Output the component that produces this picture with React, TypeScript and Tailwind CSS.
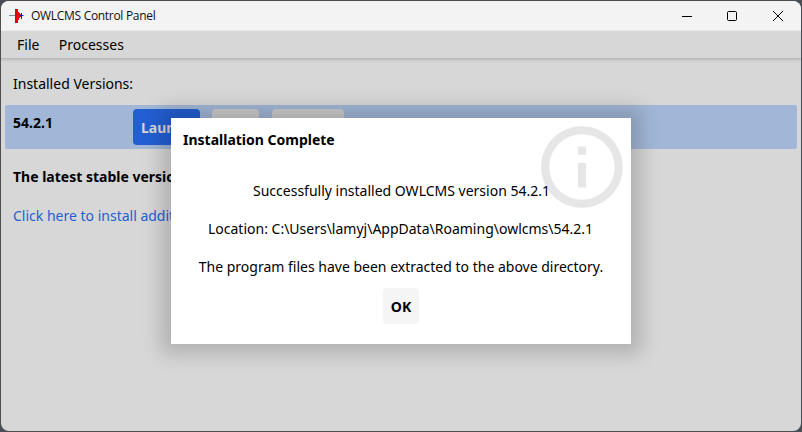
function TitleBar() {
  return (
    <header className="flex h-[30px] shrink-0 items-center bg-[#f3f3f3] pl-2">
      <svg width="16" height="16" viewBox="0 0 16 16" shapeRendering="crispEdges">
        <rect x="0" y="7" width="15" height="1" fill="#888888" />
        <rect x="6" y="1" width="2" height="14" fill="#e00000" />
        <rect x="8" y="1" width="1" height="14" fill="#2d6a20" />
        <rect x="9" y="4" width="1" height="8" fill="#f00000" />
        <rect x="10" y="5" width="1" height="5" fill="#f00000" />
        <rect x="11" y="6" width="1" height="3" fill="#c02040" />
        <rect x="12" y="5" width="1" height="6" fill="#1818c8" />
        <rect x="11" y="7" width="3" height="1" fill="#1818c8" />
      </svg>
      <h1 className="ml-[6px] font-['Open_Sans','Noto_Sans',sans-serif] text-[12px] leading-[16px] tracking-[-0.3px] text-[#111]">
        OWLCMS Control Panel
      </h1>
      <div className="ml-auto flex h-full text-black">
        <button className="flex w-[46px] items-center justify-center pl-[2px]" aria-label="Minimize">
          <svg width="10" height="10" viewBox="0 0 10 10"><path d="M0 5.500H10" stroke="currentColor" /></svg>
        </button>
        <button className="flex w-[46px] items-center justify-center" aria-label="Maximize">
          <svg width="10" height="10" viewBox="0 0 10 10" fill="none"><rect x=".5" y=".5" width="9" height="9" rx="1" stroke="currentColor" /></svg>
        </button>
        <button className="flex w-[46px] items-center justify-center" aria-label="Close">
          <svg width="10" height="10" viewBox="0 0 10 10"><path d="M0 0L10 10M10 0L0 10" stroke="currentColor" /></svg>
        </button>
      </div>
    </header>
  );
}

function InfoDialog() {
  return (
    <section
      role="dialog"
      className="absolute left-[170px] top-[117px] h-[226px] w-[460px] bg-white pt-[11px] shadow-[0_0_18px_10px_rgba(0,0,0,0.175)]"
    >
      <svg className="absolute right-0 top-0" width="98" height="98" viewBox="0 0 24 24" fill="#e6e6e6">
        <path d="M11 7h2v2h-2zm0 4h2v6h-2zm1-9C6.48 2 2 6.48 2 12s4.480 10 10 10 10-4.480 10-10S17.520 2 12 2zm0 18c-4.410 0-8-3.590-8-8s3.590-8 8-8 8 3.590 8 8-3.590 8-8 8z" />
      </svg>
      <div className="relative flex flex-col">
        <h2 className="pl-3 font-bold leading-[22px]">Installation Complete</h2>
        <div className="mt-[21px] flex flex-col items-center whitespace-nowrap leading-[38px]">
          <p className="pl-px">Successfully installed OWLCMS version 54.2.1</p>
          <p className="pr-px">Location: C:\Users\lamyj\AppData\Roaming\owlcms\54.2.1</p>
          <p>The program files have been extracted to the above directory.</p>
        </div>
        <button className="mt-[2px] flex size-9 items-center justify-center self-center rounded-[4px] bg-[#f5f5f5] font-bold">
          OK
        </button>
      </div>
    </section>
  );
}

export default function App() {
  return (
    <div className="h-[432px] w-[802px] overflow-hidden bg-[#4b4f53] p-px font-['Noto_Sans',sans-serif] text-[14px] leading-[19px] text-black">
      <div className="relative flex h-[430px] flex-col overflow-hidden rounded-[8px] bg-[#d7d7d7]">
        <TitleBar />
        <nav className="flex h-[28px] shrink-0 items-center gap-[19.4px] border-b border-[#b9b9b9] pl-4 shadow-[0_1px_3px_rgba(0,0,0,0.15)]">
          <span>File</span>
          <span>Processes</span>
        </nav>
        <main className="flex flex-col pl-1 pr-1">
          <p className="mt-[15px] pl-2">Installed Versions:</p>
          <div className="mt-3 flex h-[44px] rounded-[2px] bg-[#a2b7d7] pl-2 pt-1">
            <span className="w-[120px] pt-1 font-bold">54.2.1</span>
            <button className="flex h-9 w-[67px] items-center rounded-[4px] bg-[#235fd3] pl-2 pt-px font-bold text-[#d7d7d7]">
              Launch
            </button>
            <span className="ml-3 h-9 w-[47px] rounded-[4px] bg-[#cecece]" />
            <span className="ml-[13px] h-9 w-[72px] rounded-[4px] bg-[#cecece]" />
          </div>
          <p className="mt-[18px] pl-2 font-bold">The latest stable version is installed.</p>
          <a className="mt-5 pl-2 text-[#235fd3]">Click here to install additional versions</a>
        </main>
        <InfoDialog />
      </div>
    </div>
  );
}
